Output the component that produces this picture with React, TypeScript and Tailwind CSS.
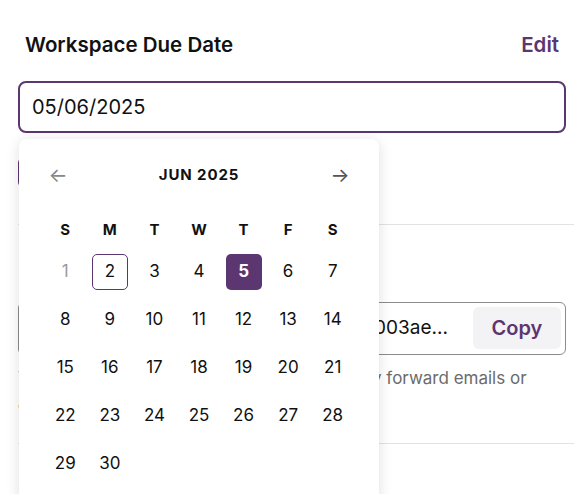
import { useState } from 'react';

const purple = 'text-[#5c3670]';

// June 2025 starts on a Sunday
const days: number[] = Array.from({ length: 30 }, (_, i) => i + 1);
const weekdays = ['S', 'M', 'T', 'W', 'T', 'F', 'S'];

function DatePicker() {
  const [selected] = useState(5);
  const focused = 2;

  return (
    <div className="absolute left-[19px] top-[139px] w-[360px] h-[380px] rounded-lg bg-white shadow-[0_2px_14px_rgba(0,0,0,0.13)] px-6 pt-[18px]">
      {/* Month header */}
      <div className="flex items-center justify-between h-9">
        <button className="w-[30px] h-9 flex items-center justify-center text-[20px] text-[#888]">←</button>
        <span className="text-[15px] font-bold tracking-[0.06em] text-[#111]">JUN 2025</span>
        <button className="w-[30px] h-9 flex items-center justify-center text-[20px] text-[#555]">→</button>
      </div>

      {/* Weekdays */}
      <div className="grid grid-cols-7 mt-[25px] h-6 items-center">
        {weekdays.map((d, i) => (
          <div key={i} className="text-center text-[15px] font-bold text-[#111]">{d}</div>
        ))}
      </div>

      {/* Days */}
      <div className="grid grid-cols-7 gap-y-3 mt-[12px]">
        {days.map((d) => (
          <div key={d} className="flex justify-center">
            <div
              className={
                'w-9 h-9 flex items-center justify-center text-[17px] rounded-[5px] ' +
                (d === selected
                  ? 'bg-[#5c3670] text-white font-bold'
                  : d === focused
                  ? 'border border-[#5c3670] text-[#111]'
                  : d === 1
                  ? 'text-[#9a9a9a]'
                  : 'text-[#111]')
              }
            >
              {d}
            </div>
          </div>
        ))}
      </div>
    </div>
  );
}

export default function App() {
  return (
    <div className="relative w-[574px] h-[494px] overflow-hidden bg-white pl-[18px] pr-[8px] font-['Inter',sans-serif]">
      {/* Due date header */}
      <div className="flex items-center justify-between pt-[30px] pl-[7px] pr-[7px]">
        <h2 className="text-[20.5px] font-semibold text-[#111]">Workspace Due Date</h2>
        <button className={`text-[20.5px] font-semibold ${purple}`}>Edit</button>
      </div>

      <div className="mt-[20px] h-[52px] border-2 border-[#5c3670] rounded-lg flex items-center px-3">
        <span className="text-[20px] text-[#111]">05/06/2025</span>
      </div>

      {/* Actions (under the picker) */}
      <div className="flex gap-3 mt-[24px]">
        <button className="h-[31px] px-4 rounded-md bg-[#5c3670] text-white text-[15px] font-semibold">Save</button>
        <button className="h-[31px] px-4 rounded-md text-[15px] text-[#111]">Cancel</button>
      </div>

      <div className="border-t border-[#e2e2e2] mt-[36px] -mr-[8px]" />

      {/* Forwarding address */}
      <div className="pt-[28px]">
        <h3 className="text-[18px] font-semibold text-[#111] pl-[7px]">Workspace Email</h3>
        <div className="mt-[22px] h-[53px] border border-[#8c8c8c] rounded-md flex items-center pl-[19px] pr-[4px]">
          <span className="flex-1 text-[19px] text-[#111] whitespace-nowrap overflow-hidden">inbox-7f2c91d04b6e8a5e19b7c2d8f4003ae...</span>
          <button className={`h-[42px] w-[88px] rounded-md bg-[#f3f2f4] text-[20px] font-semibold ${purple}`}>Copy</button>
        </div>
        <p className="mt-[11px] text-[17px] text-[#6b6b6b] whitespace-nowrap">You can upload documents here, and directly forward emails or</p>
        <p className="text-[17px] text-[#6b6b6b] whitespace-nowrap">attachments to add them to this workspace.</p>
      </div>

      <div className="border-t border-[#e2e2e2] mt-[26px] -mr-[8px]" />

      <DatePicker />
    </div>
  );
}
